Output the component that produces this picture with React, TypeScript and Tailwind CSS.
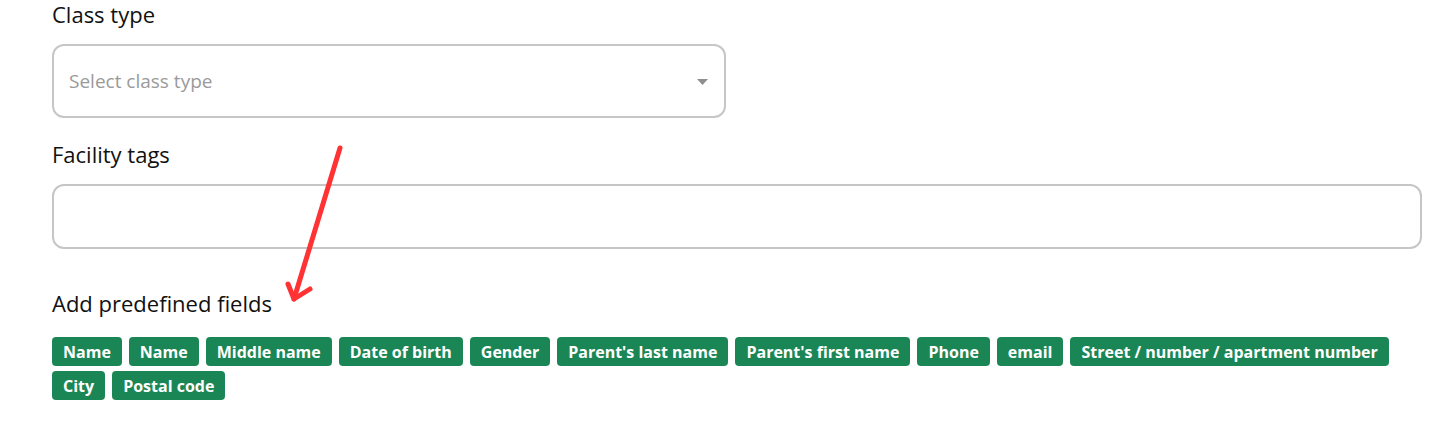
const fields = [
  'Name',
  'Name',
  'Middle name',
  'Date of birth',
  'Gender',
  "Parent's last name",
  "Parent's first name",
  'Phone',
  'email',
  'Street / number / apartment number',
  'City',
  'Postal code',
]

export default function App() {
  return (
    <div
      className="relative min-h-[422px] w-full bg-white pl-[52px] pr-[33px] text-[#111]"
      style={{ fontFamily: '"Open Sans", "Noto Sans", sans-serif' }}
    >
      {/* Class type */}
      <div className="pt-0 text-[22px] leading-[28px]">Class type</div>
      <div className="mt-[16px] flex h-[74px] w-[674px] items-center justify-between rounded-[12px] border-2 border-[#c6c6c6] pl-[15px] pr-[16px]">
        <span className="text-[19px] text-[#9a9a9a]">Select class type</span>
        <svg width="11" height="6" viewBox="0 0 11 6" className="mt-[2px]">
          <path d="M0 0h11L5.5 6z" fill="#8f8f8f" />
        </svg>
      </div>

      {/* Facility tags */}
      <div className="mt-[22px] text-[22px] leading-[28px]">Facility tags</div>
      <div className="mt-[16px] h-[65px] w-full rounded-[12px] border-2 border-[#c6c6c6]" />

      {/* Predefined fields */}
      <div className="mt-[40px] text-[22px] leading-[28px]">Add predefined fields</div>
      <div className="mt-[20px] flex flex-wrap gap-x-[7px] gap-y-[5px]">
        {fields.map((f, i) => (
          <span
            key={i}
            className="flex h-[29px] items-center rounded-[4px] bg-[#1b8655] px-[11px] text-[16px] font-bold text-white"
          >
            {f}
          </span>
        ))}
      </div>

      {/* annotation arrow */}
      <svg
        className="pointer-events-none absolute left-0 top-0"
        width="1455"
        height="422"
        viewBox="0 0 1455 422"
      >
        <g stroke="#ff3333" strokeWidth="5" strokeLinecap="round" strokeLinejoin="round" fill="none">
          <path d="M340 148L294 299" />
          <path d="M288 284L294 299L310 289" />
        </g>
      </svg>
    </div>
  )
}
